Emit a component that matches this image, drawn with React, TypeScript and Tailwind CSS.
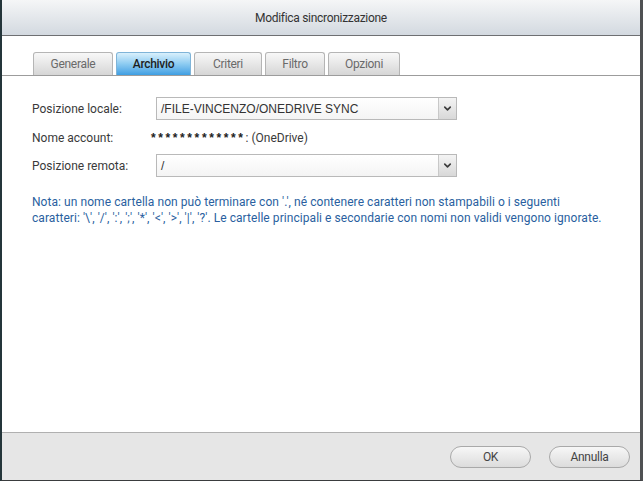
import { ChevronDown } from 'lucide-react'

const TABS: [string, number][] = [
  ['Generale', 80],
  ['Archivio', 75],
  ['Criteri', 68],
  ['Filtro', 60],
  ['Opzioni', 72],
]
const ACTIVE = 'Archivio'

function Tab({ label, width }: { label: string; width: number }) {
  const active = label === ACTIVE
  return (
    <div
      style={{ width }}
      className={
        active
          ? 'h-[23px] flex items-center justify-center rounded-t-[3px] border border-b-0 border-[#7fb4d8] bg-gradient-to-b from-[#d9f0fc] via-[#8ccbf1] to-[#3d9ee2] text-[#1d1d1d] font-medium'
          : 'h-[23px] flex items-center justify-center rounded-t-[3px] border border-b-0 border-[#b5b5b5] bg-gradient-to-b from-[#f8f8f8] to-[#d6d6d6] text-[#6a6a6a]'
      }
    >
      {label}
    </div>
  )
}

function Select({ value }: { value: string }) {
  return (
    <div className="w-[301px] h-[23px] flex border border-[#b9b9b9] bg-gradient-to-b from-white to-[#f4f4f4]">
      <div className="flex-1 flex items-center pl-[4px] font-['Liberation_Sans',Arial,sans-serif] text-[12px] text-[#333]">
        {value}
      </div>
      <div className="w-[18px] flex items-center justify-center border-l border-[#c8c8c8] bg-gradient-to-b from-[#f4f4f4] to-[#d8d8d8]">
        <ChevronDown size={11} strokeWidth={3.5} className="text-[#3c3c3c]" />
      </div>
    </div>
  )
}

export default function App() {
  return (
    <div className="w-[643px] h-[481px] flex flex-col bg-white border-l-2 border-l-[#24353a] border-r-[3px] border-r-[#4f5153] border-b border-b-[#3a3c3e] font-['Roboto',sans-serif]">
      <header className="h-[36px] shrink-0 flex items-center justify-center bg-gradient-to-b from-[#f5f6f7] to-[#d3d9e0] border-b border-[#6e6f72] text-[12px] tracking-[-0.3px] text-[#333]">
        Modifica sincronizzazione
      </header>

      <div className="flex-1 flex flex-col">
        <nav className="mt-[16px] flex items-end gap-[3px] pl-[31px] border-b border-[#9c9c9c] text-[12px] tracking-[-0.3px]">
          {TABS.map(([t, w]) => (
            <Tab key={t} label={t} width={w} />
          ))}
        </nav>

        <div className="pl-[30px] pt-[21px] text-[12px] text-[#3a3a3a]">
          <div className="flex items-center h-[23px]">
            <span className="w-[124px]">Posizione locale:</span>
            <Select value="/FILE-VINCENZO/ONEDRIVE SYNC" />
          </div>
          <div className="flex items-center h-[23px] mt-[6px]">
            <span className="w-[119px]">Nome account:</span>
            <span className="font-['Liberation_Sans',Arial,sans-serif] font-bold text-[12px] tracking-[2.6px] text-[#222]">*************</span>
            <span>: (OneDrive)</span>
          </div>
          <div className="flex items-center h-[23px] mt-[5px]">
            <span className="w-[124px]">Posizione remota:</span>
            <Select value="/" />
          </div>
          <p className="mt-[17px] pr-[10px] leading-[16px] text-[#2a5fa0] tracking-[0.06px] whitespace-nowrap">
            Nota: un nome cartella non può terminare con '.', né contenere caratteri non stampabili o i seguenti
            <br />
            caratteri: '\', '/', ':', ';', '*', '&lt;', '&gt;', '|', '?'. Le cartelle principali e secondarie con nomi non validi vengono ignorate.
          </p>
        </div>
      </div>

      <footer className="h-[48px] shrink-0 flex items-center justify-end gap-[18px] pr-[10px] bg-[#e6e6e6] border-t border-[#b0b0b0] text-[12px] tracking-[-0.3px] text-[#444]">
        <button className="w-[81px] h-[22px] rounded-full border border-[#a9a9a9] bg-gradient-to-b from-[#f7f7f7] to-[#dcdcdc]">OK</button>
        <button className="w-[81px] h-[22px] rounded-full border border-[#a9a9a9] bg-gradient-to-b from-[#f7f7f7] to-[#dcdcdc]">Annulla</button>
      </footer>
    </div>
  )
}
